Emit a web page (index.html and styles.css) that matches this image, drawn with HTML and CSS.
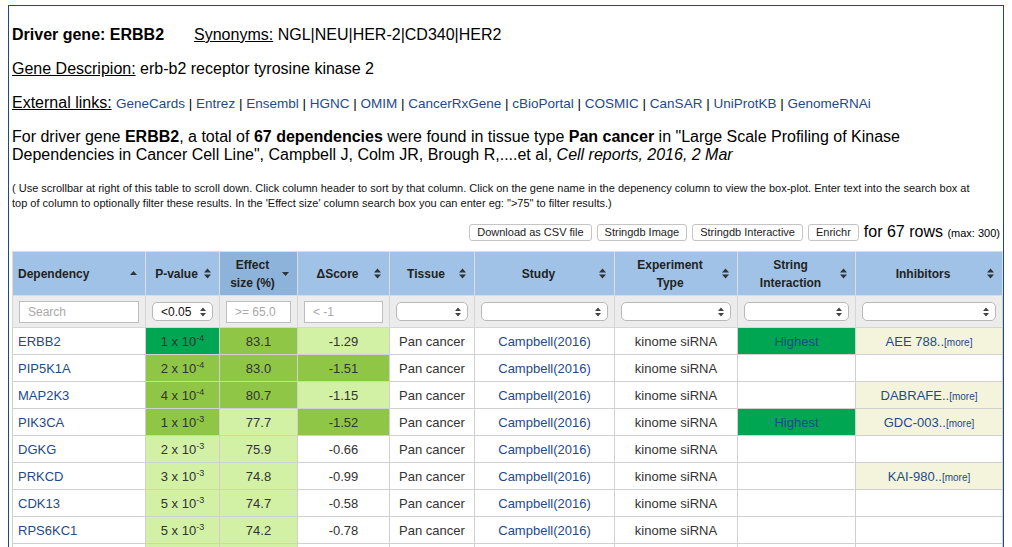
FILE: index.html
```html
<!DOCTYPE html>
<html>
<head>
<meta charset="utf-8">
<title>Driver gene ERBB2</title>
<link rel="stylesheet" href="styles.css">
</head>
<body>
<div class="panel">
  <div class="line first"><b>Driver gene: ERBB2</b><span class="syn"><u>Synonyms:</u> NGL|NEU|HER-2|CD340|HER2</span></div>
  <div class="line"><u>Gene Descripion:</u> erb-b2 receptor tyrosine kinase 2</div>
  <div class="line"><u>External links:</u> <span class="links"><a href="#">GeneCards</a> | <a href="#">Entrez</a> | <a href="#">Ensembl</a> | <a href="#">HGNC</a> | <a href="#">OMIM</a> | <a href="#">CancerRxGene</a> | <a href="#">cBioPortal</a> | <a href="#">COSMIC</a> | <a href="#">CanSAR</a> | <a href="#">UniProtKB</a> | <a href="#">GenomeRNAi</a></span></div>
  <p class="summary">For driver gene <b>ERBB2</b>, a total of <b>67 dependencies</b> were found in tissue type <b>Pan cancer</b> in "Large Scale Profiling of Kinase Dependencies in Cancer Cell Line", Campbell J, Colm JR, Brough R,....et al, <i>Cell reports, 2016, 2 Mar</i></p>
  <p class="note">( Use scrollbar at right of this table to scroll down. Click column header to sort by that column. Click on the gene name in the depenency column to view the box-plot. Enter text into the search box at top of column to optionally filter these results. In the 'Effect size' column search box you can enter eg: "&gt;75" to filter results.)</p>
  <div class="tools">
    <button class="btn">Download as CSV file</button>
    <button class="btn">Stringdb Image</button>
    <button class="btn">Stringdb Interactive</button>
    <button class="btn">Enrichr</button>
    <span class="count">for 67 rows <small>(max: 300)</small></span>
  </div>
  <table class="deps">
    <colgroup>
      <col style="width:133px"><col style="width:74px"><col style="width:78px"><col style="width:92px"><col style="width:85px"><col style="width:140px"><col style="width:123px"><col style="width:118px"><col style="width:147px">
    </colgroup>
    <thead>
      <tr class="head">
        <th><div class="th-in left"><span class="lbl">Dependency</span><svg class="si" viewBox="0 0 7 11" width="7" height="11"><polygon points="0,7 3.5,3 7,7"/></svg></div></th>
        <th><div class="th-in"><span class="lbl">P-value</span><svg class="si" viewBox="0 0 7 11" width="7" height="11"><polygon points="0,4.5 3.5,0.5 7,4.5"/><polygon points="0,6.5 3.5,10.5 7,6.5"/></svg></div></th>
        <th class="sorted"><div class="th-in"><span class="lbl">Effect<br>size (%)</span><svg class="si" viewBox="0 0 7 11" width="7" height="11"><polygon points="0,4 3.5,8 7,4"/></svg></div></th>
        <th><div class="th-in"><span class="lbl">ΔScore</span><svg class="si" viewBox="0 0 7 11" width="7" height="11"><polygon points="0,4.5 3.5,0.5 7,4.5"/><polygon points="0,6.5 3.5,10.5 7,6.5"/></svg></div></th>
        <th><div class="th-in"><span class="lbl">Tissue</span><svg class="si" viewBox="0 0 7 11" width="7" height="11"><polygon points="0,4.5 3.5,0.5 7,4.5"/><polygon points="0,6.5 3.5,10.5 7,6.5"/></svg></div></th>
        <th><div class="th-in"><span class="lbl">Study</span><svg class="si" viewBox="0 0 7 11" width="7" height="11"><polygon points="0,4.5 3.5,0.5 7,4.5"/><polygon points="0,6.5 3.5,10.5 7,6.5"/></svg></div></th>
        <th><div class="th-in"><span class="lbl">Experiment<br>Type</span><svg class="si" viewBox="0 0 7 11" width="7" height="11"><polygon points="0,4.5 3.5,0.5 7,4.5"/><polygon points="0,6.5 3.5,10.5 7,6.5"/></svg></div></th>
        <th><div class="th-in"><span class="lbl">String<br>Interaction</span><svg class="si" viewBox="0 0 7 11" width="7" height="11"><polygon points="0,4.5 3.5,0.5 7,4.5"/><polygon points="0,6.5 3.5,10.5 7,6.5"/></svg></div></th>
        <th><div class="th-in"><span class="lbl">Inhibitors</span><svg class="si" viewBox="0 0 7 11" width="7" height="11"><polygon points="0,4.5 3.5,0.5 7,4.5"/><polygon points="0,6.5 3.5,10.5 7,6.5"/></svg></div></th>
      </tr>
      <tr class="filters">
        <td><input class="inp" placeholder="Search"></td>
        <td><div class="sel"><span>&lt;0.05</span><svg viewBox="0 0 6 10" width="6" height="10"><polygon points="0,4 3,0.5 6,4"/><polygon points="0,6 3,9.5 6,6"/></svg></div></td>
        <td><input class="inp" placeholder="&gt;= 65.0"></td>
        <td><input class="inp" placeholder="&lt; -1"></td>
        <td><div class="sel"><span></span><svg viewBox="0 0 6 10" width="6" height="10"><polygon points="0,4 3,0.5 6,4"/><polygon points="0,6 3,9.5 6,6"/></svg></div></td>
        <td><div class="sel"><span></span><svg viewBox="0 0 6 10" width="6" height="10"><polygon points="0,4 3,0.5 6,4"/><polygon points="0,6 3,9.5 6,6"/></svg></div></td>
        <td><div class="sel"><span></span><svg viewBox="0 0 6 10" width="6" height="10"><polygon points="0,4 3,0.5 6,4"/><polygon points="0,6 3,9.5 6,6"/></svg></div></td>
        <td><div class="sel"><span></span><svg viewBox="0 0 6 10" width="6" height="10"><polygon points="0,4 3,0.5 6,4"/><polygon points="0,6 3,9.5 6,6"/></svg></div></td>
        <td><div class="sel"><span></span><svg viewBox="0 0 6 10" width="6" height="10"><polygon points="0,4 3,0.5 6,4"/><polygon points="0,6 3,9.5 6,6"/></svg></div></td>
      </tr>
    </thead>
    <tbody>
      <tr>
        <td class="gene"><a href="#">ERBB2</a></td>
        <td class="g3">1 x 10<sup>-4</sup></td>
        <td class="g2">83.1</td>
        <td class="g1">-1.29</td>
        <td>Pan cancer</td>
        <td><a href="#">Campbell(2016)</a></td>
        <td>kinome siRNA</td>
        <td class="g3"><a href="#">Highest</a></td>
        <td class="inh"><a href="#">AEE 788..</a><a class="more" href="#">[more]</a></td>
      </tr>
      <tr>
        <td class="gene"><a href="#">PIP5K1A</a></td>
        <td class="g2">2 x 10<sup>-4</sup></td>
        <td class="g2">83.0</td>
        <td class="g2">-1.51</td>
        <td>Pan cancer</td>
        <td><a href="#">Campbell(2016)</a></td>
        <td>kinome siRNA</td>
        <td></td>
        <td></td>
      </tr>
      <tr>
        <td class="gene"><a href="#">MAP2K3</a></td>
        <td class="g2">4 x 10<sup>-4</sup></td>
        <td class="g2">80.7</td>
        <td class="g1">-1.15</td>
        <td>Pan cancer</td>
        <td><a href="#">Campbell(2016)</a></td>
        <td>kinome siRNA</td>
        <td></td>
        <td class="inh"><a href="#">DABRAFE..</a><a class="more" href="#">[more]</a></td>
      </tr>
      <tr>
        <td class="gene"><a href="#">PIK3CA</a></td>
        <td class="g2">1 x 10<sup>-3</sup></td>
        <td class="g1">77.7</td>
        <td class="g2">-1.52</td>
        <td>Pan cancer</td>
        <td><a href="#">Campbell(2016)</a></td>
        <td>kinome siRNA</td>
        <td class="g3"><a href="#">Highest</a></td>
        <td class="inh"><a href="#">GDC-003..</a><a class="more" href="#">[more]</a></td>
      </tr>
      <tr>
        <td class="gene"><a href="#">DGKG</a></td>
        <td class="g1">2 x 10<sup>-3</sup></td>
        <td class="g1">75.9</td>
        <td>-0.66</td>
        <td>Pan cancer</td>
        <td><a href="#">Campbell(2016)</a></td>
        <td>kinome siRNA</td>
        <td></td>
        <td></td>
      </tr>
      <tr>
        <td class="gene"><a href="#">PRKCD</a></td>
        <td class="g1">3 x 10<sup>-3</sup></td>
        <td class="g1">74.8</td>
        <td>-0.99</td>
        <td>Pan cancer</td>
        <td><a href="#">Campbell(2016)</a></td>
        <td>kinome siRNA</td>
        <td></td>
        <td class="inh"><a href="#">KAI-980..</a><a class="more" href="#">[more]</a></td>
      </tr>
      <tr>
        <td class="gene"><a href="#">CDK13</a></td>
        <td class="g1">5 x 10<sup>-3</sup></td>
        <td class="g1">74.7</td>
        <td>-0.58</td>
        <td>Pan cancer</td>
        <td><a href="#">Campbell(2016)</a></td>
        <td>kinome siRNA</td>
        <td></td>
        <td></td>
      </tr>
      <tr>
        <td class="gene"><a href="#">RPS6KC1</a></td>
        <td class="g1">5 x 10<sup>-3</sup></td>
        <td class="g1">74.2</td>
        <td>-0.78</td>
        <td>Pan cancer</td>
        <td><a href="#">Campbell(2016)</a></td>
        <td>kinome siRNA</td>
        <td></td>
        <td></td>
      </tr>
      <tr>
        <td class="gene"></td>
        <td class="g1"></td>
        <td class="g1"></td>
        <td></td>
        <td></td>
        <td></td>
        <td></td>
        <td></td>
        <td></td>
      </tr>
    </tbody>
  </table>
</div>
</body>
</html>
```
FILE: styles.css
```css
html, body {
  margin: 0;
  padding: 0;
  overflow: hidden;
  background: #fff;
}
body {
  font-family: "Liberation Sans", Arial, Helvetica, sans-serif;
  color: #000;
}
a {
  color: #1e4a8a;
  text-decoration: none;
}
.panel {
  box-sizing: border-box;
  width: 996px;
  margin: 5px 0 0 8px;
  border: 1px solid #1f4b7c;
  padding: 0 0 0 3px;
}
.line {
  font-size: 16px;
  line-height: 18px;
  margin-top: 16px;
  white-space: nowrap;
}
.line.first {
  margin-top: 20px;
}
.syn {
  margin-left: 30px;
}
.links {
  font-size: 13.5px;
}
.summary {
  font-size: 16px;
  line-height: 18px;
  margin: 15px 0 0 0;
  width: 960px;
}
.note {
  font-size: 11px;
  line-height: 15px;
  margin: 17px 0 0 0;
  width: 972px;
  color: #111;
}
.tools {
  display: flex;
  justify-content: flex-end;
  align-items: center;
  gap: 5px;
  height: 19px;
  margin-top: 12px;
  padding-right: 3px;
}
.btn {
  font-family: "Liberation Sans", Arial, sans-serif;
  font-size: 11px;
  height: 17px;
  line-height: 15px;
  padding: 0 7px;
  background: #fff;
  border: 1px solid #c4c4c4;
  border-radius: 3px;
  color: #222;
  margin: 0;
}
.count {
  font-size: 16px;
  line-height: 18px;
}
.count small {
  font-size: 11px;
}
.deps {
  margin-top: 9px;
  width: 990px;
  table-layout: fixed;
  border-collapse: collapse;
  font-size: 13px;
}
.deps th {
  background: #9fc2e6;
  border: 1px solid #dcdcdc;
  font-size: 12px;
  font-weight: bold;
  color: #222;
  padding: 0 8px 0 5px;
  height: 43px;
}
.deps th.sorted {
  background: #8db3da;
}
.th-in {
  display: flex;
  align-items: center;
  gap: 2px;
}
.th-in .lbl {
  flex: 1;
  text-align: center;
  line-height: 18px;
}
.th-in.left .lbl {
  text-align: left;
}
.si {
  flex: none;
  fill: #333;
}
.filters td {
  background: #ececec;
  border: 1px solid #d6d6d6;
  padding: 0 6px;
  height: 31px;
}
.inp {
  box-sizing: border-box;
  width: 100%;
  height: 22px;
  border: 1px solid #bdbdbd;
  border-radius: 0;
  padding: 0 8px;
  font-family: "Liberation Sans", Arial, sans-serif;
  font-size: 12px;
  background: #fff;
  display: block;
}
.inp::placeholder {
  color: #a9a9a9;
}
.sel {
  box-sizing: border-box;
  width: 100%;
  height: 19px;
  border: 1px solid #b8b8b8;
  border-radius: 5px;
  background: #fff;
  display: flex;
  align-items: center;
  justify-content: space-between;
  padding: 0 6px 0 8px;
  font-size: 12px;
  color: #111;
}
.sel svg {
  fill: #444;
  flex: none;
}
.deps tbody td {
  border: 1px solid #d0d0d0;
  height: 26px;
  padding: 0 4px;
  text-align: center;
  color: #333;
  white-space: nowrap;
  overflow: hidden;
}
.deps tbody td.gene {
  text-align: left;
  padding-left: 5px;
}
.deps sup {
  font-size: 9px;
  line-height: 0;
}
.g3 { background: #00a651; }
.g2 { background: #8fc646; }
.g1 { background: #d2f1a4; }
.deps tbody td.inh {
  background: #f4f4dc;
}
.more {
  font-size: 10px;
}
```
